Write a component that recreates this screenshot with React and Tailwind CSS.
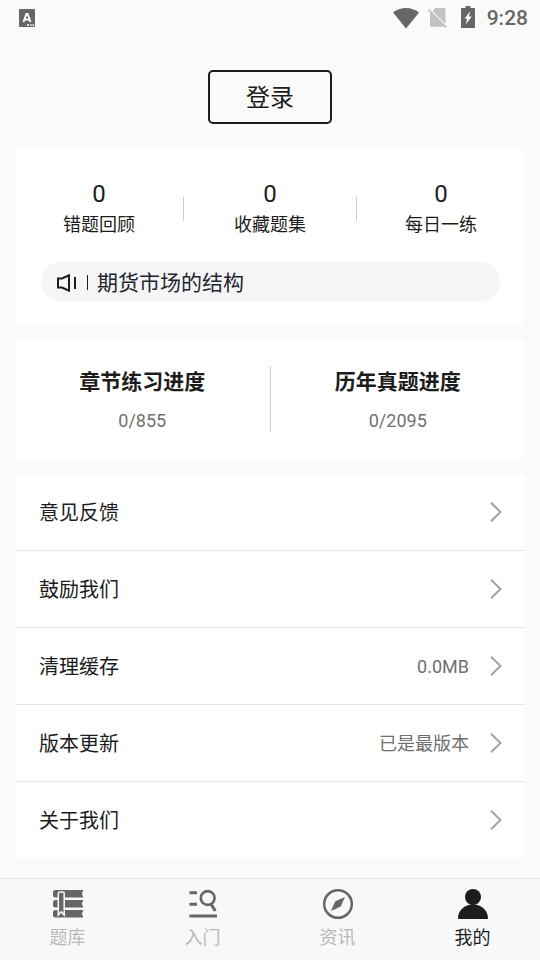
const stats = [
  { label: "错题回顾", value: 0 },
  { label: "收藏题集", value: 0 },
  { label: "每日一练", value: 0 },
];

const progress = [
  { label: "章节练习进度", value: "0/855" },
  { label: "历年真题进度", value: "0/2095" },
];

const menu = [
  { label: "意见反馈" },
  { label: "鼓励我们" },
  { label: "清理缓存", value: "0.0MB" },
  { label: "版本更新", value: "已是最版本" },
  { label: "关于我们" },
];

const tabs = [
  { label: "题库", icon: BooksIcon },
  { label: "入门", icon: SearchListIcon },
  { label: "资讯", icon: CompassIcon },
  { label: "我的", icon: UserIcon, active: true },
];

function KeyboardIcon() {
  return (
    <svg width="16" height="18" viewBox="0 0 16 18" aria-hidden="true">
      <rect width="16" height="18" rx="1" fill="#666" />
      <path d="M4.500 13 7.400 5h1.200l2.900 8M5.600 10.600h4.800" fill="none" stroke="#fff" strokeWidth="1.900" />
      <path d="M8 15h2v2H8zM11 15h1.600v2H11zM13.500 15h1.500v2h-1.500z" fill="#ddd" />
    </svg>
  );
}

function WifiIcon() {
  return (
    <svg width="26" height="21" viewBox="0 0 26 21" aria-hidden="true">
      <path d="M0 4.500C3.700 1.500 8.200 0 13 0s9.300 1.500 13 4.500L13 20.500z" fill="#666" />
    </svg>
  );
}

function NoSimIcon() {
  return (
    <svg width="20" height="20" viewBox="0 0 20 20" aria-hidden="true">
      <path d="M7.500 0H16c.9 0 1.500.6 1.500 1.500v14.400L4.500 2.900zM2 3.500 17.300 18.800H3.500C2.600 18.800 2 18.200 2 17.300z" fill="#c3c3c3" />
      <path d="M.2 1.300 18.500 19.600" stroke="#c3c3c3" strokeWidth="1.800" />
    </svg>
  );
}

function BatteryIcon() {
  return (
    <svg width="14" height="24" viewBox="0 0 14 24" aria-hidden="true">
      <path d="M4.500 0h5v2H13c.6 0 1 .4 1 1v18c0 .6-.4 1-1 1H1c-.6 0-1-.4-1-1V3c0-.6.4-1 1-1h3.500z" fill="#666" />
      <path d="M9.500 5 3.500 12.500H6.200L4.700 18.500 10.800 10.500H7.800z" fill="#fafafa" />
    </svg>
  );
}

function SpeakerIcon() {
  return (
    <svg width="20" height="18" viewBox="0 0 20 18" fill="none" stroke="#1c1c1c" strokeWidth="2" aria-hidden="true">
      <path d="M1 4.500h4L12 1.300v15.400l-7-3.200H1z" />
      <path d="M18 3v12" />
    </svg>
  );
}

function ChevronIcon() {
  return (
    <svg width="12" height="20" viewBox="0 0 12 20" fill="none" stroke="#a3a3a3" strokeWidth="2" aria-hidden="true">
      <path d="M1 .8 10.500 10 1 19.200" />
    </svg>
  );
}

function BooksIcon() {
  return (
    <svg width="32" height="32" viewBox="0 0 32 32" aria-hidden="true">
      <g fill="#666">
        <path d="M3.500 2H31v1.200q-2 2.500 0 5V9.500H3.500Q1 9.500 1 7V4.500Q1 2 3.500 2z" />
        <path d="M3.500 12H31v1.200q-2 2.500 0 5V19.500H3.500Q1 19.500 1 17v-2.500Q1 12 3.500 12z" />
        <path d="M3.500 22H31v1.200q-2 2.500 0 5V29.500H3.500Q1 29.500 1 27v-2.500Q1 22 3.500 22z" />
      </g>
      <path d="M6.300 27V5.500Q6.300 4 7.800 4h2.900q1.500 0 1.500 1.500V27l-3-3.200z" fill="#666" stroke="#f8f8f8" strokeWidth="1.500" />
    </svg>
  );
}

function SearchListIcon() {
  return (
    <svg width="32" height="32" viewBox="0 0 32 32" fill="none" stroke="#666" aria-hidden="true">
      <path d="M2.500 4.700H10M2.500 16.200H10M2.500 28H30" strokeWidth="3" />
      <circle cx="20.700" cy="10" r="6.900" strokeWidth="2.600" />
      <path d="m24 16 4.300 7" strokeWidth="3" />
    </svg>
  );
}

function CompassIcon() {
  return (
    <svg width="32" height="32" viewBox="0 0 32 32" aria-hidden="true">
      <circle cx="16" cy="16" r="13.800" fill="none" stroke="#666" strokeWidth="2.500" />
      <path d="M23 9 18.700 18.500 9 23l4.300-9.700z" fill="#666" />
    </svg>
  );
}

function UserIcon() {
  return (
    <svg width="32" height="32" viewBox="0 0 32 32" fill="#1c1c1c" aria-hidden="true">
      <circle cx="16" cy="9" r="8" />
      <path d="M1 30.200C1 22.500 7.500 16.500 16 16.500s15 6 15 13.700q0 .8-.8.8H1.800q-.8 0-.8-.8z" />
    </svg>
  );
}

function StatusBar() {
  return (
    <div className="flex h-9 items-center justify-between pl-[19px] pr-3">
      <KeyboardIcon />
      <div className="flex items-center">
        <WifiIcon />
        <div className="ml-[9px]">
          <NoSimIcon />
        </div>
        <div className="ml-[13px]">
          <BatteryIcon />
        </div>
        <span className="ml-3 text-[21px] leading-6 font-medium text-[#666]">9:28</span>
      </div>
    </div>
  );
}

function Stat({ label, value }) {
  return (
    <button type="button" className="flex flex-col items-center gap-0.5">
      <span className="text-2xl leading-[30px]">{value}</span>
      <span className="text-lg leading-7">{label}</span>
    </button>
  );
}

function Progress({ label, value }) {
  return (
    <button type="button" className="flex flex-1 flex-col items-center gap-[11px]">
      <span className="text-[21px] leading-8 font-bold">{label}</span>
      <span className="text-lg leading-[23px] text-[#707070]">{value}</span>
    </button>
  );
}

export default function App() {
  return (
    <div className="flex min-h-screen flex-col bg-[#fafafa] font-[Roboto,'Noto_Sans_CJK_SC',sans-serif] text-[#1c1c1c]">
      <StatusBar />

      <main className="flex flex-1 flex-col gap-[15px] px-[15px] pb-5">
        <div className="flex justify-center pt-[34px] pb-[10px]">
          <button type="button" className="rounded-[5px] border-2 border-[#1c1c1c] px-9 pt-[10px] pb-2 text-2xl leading-8">
            登录
          </button>
        </div>

        <section className="rounded-md bg-white pt-[30px] pb-[23px]">
          <div className="grid grid-cols-[168fr_1px_172fr_1px_168fr] items-center">
            <Stat {...stats[0]} />
            <div className="h-6 bg-[#ccc]" />
            <Stat {...stats[1]} />
            <div className="h-6 bg-[#ccc]" />
            <Stat {...stats[2]} />
          </div>
          <a href="#notice" className="mt-[23px] mr-[25px] ml-[26px] flex h-[39px] items-center rounded-full bg-[#f5f5f5] pt-0.5 pl-4">
            <SpeakerIcon />
            <span className="mr-[9px] ml-[10px] h-[15px] w-px bg-[#1c1c1c]" />
            <span className="text-[21px] leading-8 text-[#1f2530]">期货市场的结构</span>
          </a>
        </section>

        <section className="flex items-center rounded-md bg-white py-[27px]">
          <Progress {...progress[0]} />
          <div className="h-[66px] w-px bg-[#ccc]" />
          <Progress {...progress[1]} />
        </section>

        <ul className="divide-y divide-[#e8e8e8] rounded-md bg-white">
          {menu.map((item) => (
            <li key={item.label}>
              <button type="button" className="flex h-[76px] w-full items-center pr-[23px] pl-6">
                <span className="pt-0.5 text-xl leading-8">{item.label}</span>
                <span className="mr-[21px] ml-auto pt-0.5 text-lg leading-7 text-[#707070]">{item.value}</span>
                <ChevronIcon />
              </button>
            </li>
          ))}
        </ul>
      </main>

      <nav className="flex border-t border-[#e5e5e5] bg-[#f8f8f8] pt-[9px] pb-2">
        {tabs.map(({ label, icon: Icon, active }) => (
          <button
            key={label}
            type="button"
            aria-current={active ? "page" : undefined}
            className={`flex flex-1 flex-col items-center gap-1 ${active ? "text-[#1c1c1c]" : "text-[#b8b8b8]"}`}
          >
            <Icon />
            <span className="text-lg leading-7">{label}</span>
          </button>
        ))}
      </nav>
    </div>
  );
}
